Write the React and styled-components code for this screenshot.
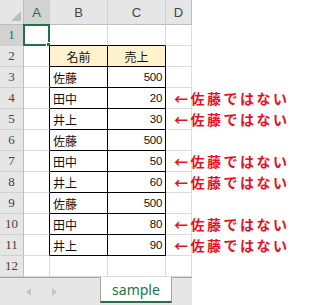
import React from "react";
import styled, { createGlobalStyle } from "styled-components";

const GRID = "#dadada";
const LINE = "#bdbdbd";
const GREEN = "#217346";

const GlobalStyle = createGlobalStyle`
  body {
    margin: 0;
    background: #fff;
    font-family: "Noto Sans CJK JP", "Noto Sans", sans-serif;
  }
`;

const rows = [
  { name: "", sales: "" },
  { name: "名前", sales: "売上", head: true },
  { name: "佐藤", sales: "500" },
  { name: "田中", sales: "20", note: true },
  { name: "井上", sales: "30", note: true },
  { name: "佐藤", sales: "500" },
  { name: "田中", sales: "50", note: true },
  { name: "井上", sales: "60", note: true },
  { name: "佐藤", sales: "500" },
  { name: "田中", sales: "80", note: true },
  { name: "井上", sales: "90", note: true },
  { name: "", sales: "" },
];

const Sheet = styled.div`
  display: grid;
  grid-template-columns: 24px 26px 58px 58px 26px;
  grid-template-rows: 25px repeat(12, 21px);
  width: 192px;
`;

const Corner = styled.div`
  background: #e6e6e6;
  border-right: 1px solid ${LINE};
  border-bottom: 1px solid ${LINE};
  box-sizing: border-box;
  display: flex;
  align-items: flex-end;
  justify-content: flex-end;
  padding: 0 2px 3px 0;

  svg {
    display: block;
  }
`;

const ColHead = styled.div`
  background: ${(p) => (p.$sel ? "#d2d2d2" : "#e6e6e6")};
  color: ${(p) => (p.$sel ? GREEN : "#444")};
  border-right: 1px solid ${(p) => (p.$last ? LINE : "#d0d0d0")};
  border-bottom: 1px solid ${LINE};
  box-sizing: border-box;
  display: flex;
  align-items: center;
  justify-content: center;
  font-family: "Liberation Sans", Arial, sans-serif;
  font-size: 13px;
  padding-top: 1px;
`;

const RowHead = styled.div`
  background: ${(p) => (p.$sel ? "#d2d2d2" : "#e6e6e6")};
  color: ${(p) => (p.$sel ? GREEN : "#444")};
  border-right: 1px solid ${LINE};
  border-bottom: 1px solid #d0d0d0;
  box-sizing: border-box;
  display: flex;
  align-items: center;
  justify-content: center;
  font-family: "Liberation Serif", serif;
  font-size: 13px;
`;

const Cell = styled.div`
  position: relative;
  background: ${(p) => (p.$head ? "#fff2cc" : "#fff")};
  border-right: 1px solid ${(p) => (p.$r ? "#000" : GRID)};
  border-bottom: 1px solid ${(p) => (p.$b ? "#000" : GRID)};
  box-sizing: border-box;
  display: flex;
  align-items: center;
  justify-content: ${(p) => p.$align || "flex-start"};
  padding: 0 3px;
  font-size: 12px;
  color: #111;
  white-space: nowrap;
`;

const Num = styled.span`
  font-family: "Liberation Sans", Arial, sans-serif;
  font-size: 11.5px;
  letter-spacing: -0.3px;
`;

const Note = styled.span`
  color: #e8101e;
  font-weight: 700;
  font-size: 14px;
  letter-spacing: 2.5px;
  padding-left: 5px;
  position: relative;
  z-index: 1;
`;

const Selection = styled.div`
  position: absolute;
  left: -1px;
  top: -1px;
  right: -1px;
  bottom: -1px;
  border: 2px solid ${GREEN};
  pointer-events: none;

  &::after {
    content: "";
    position: absolute;
    right: -5px;
    bottom: -5px;
    width: 5px;
    height: 5px;
    background: ${GREEN};
    border: 1px solid #fff;
  }
`;

const TabBar = styled.div`
  display: flex;
  align-items: flex-start;
  width: 192px;
  height: 28px;
  background: #e6e6e6;
`;

const Nav = styled.div`
  width: 100px;
  height: 100%;
  box-sizing: border-box;
  border-top: 1px solid #a6a6a6;
  display: flex;
  align-items: center;
  gap: 21px;
  padding-left: 26px;
`;

const Tab = styled.div`
  width: 72px;
  height: 26px;
  box-sizing: border-box;
  background: #fff;
  border-left: 1px solid #a6a6a6;
  border-right: 1px solid #a6a6a6;
  border-bottom: 2px solid ${GREEN};
  display: flex;
  align-items: center;
  justify-content: center;
  color: ${GREEN};
  font-family: "Noto Sans", sans-serif;
  font-size: 14px;
`;

const Rest = styled.div`
  flex: 1;
  height: 100%;
  border-top: 1px solid #a6a6a6;
`;

function Arrow({ dir }) {
  return (
    <svg width="5" height="8" viewBox="0 0 5 8">
      <path d={dir === "left" ? "M5 0 L0 4 L5 8 Z" : "M0 0 L5 4 L0 8 Z"} fill="#c4c4c4" />
    </svg>
  );
}

export default function App() {
  return (
    <>
      <GlobalStyle />
      <Sheet>
        <Corner>
          <svg width="10" height="10" viewBox="0 0 10 10">
            <path d="M10 0 L10 10 L0 10 Z" fill="#bdbdbd" />
          </svg>
        </Corner>
        {["A", "B", "C", "D"].map((c, i) => (
          <ColHead key={c} $sel={i === 0} $last={i === 3}>
            {c}
          </ColHead>
        ))}
        {rows.map((row, i) => {
          const n = i + 1;
          const inTable = n >= 2 && n <= 11;
          const tableTop = n >= 1 && n <= 11;
          return (
            <React.Fragment key={n}>
              <RowHead $sel={n === 1}>{n}</RowHead>
              <Cell $r={inTable}>{n === 1 && <Selection />}</Cell>
              <Cell
                $r={inTable}
                $b={tableTop}
                $head={row.head}
                $align={row.head ? "center" : "flex-start"}
              >
                {row.name}
              </Cell>
              <Cell
                $r={inTable}
                $b={tableTop}
                $head={row.head}
                $align={row.head ? "center" : "flex-end"}
              >
                {row.head ? row.sales : <Num>{row.sales}</Num>}
              </Cell>
              <Cell>{row.note && <Note>←佐藤ではない</Note>}</Cell>
            </React.Fragment>
          );
        })}
      </Sheet>
      <TabBar>
        <Nav>
          <Arrow dir="left" />
          <Arrow dir="right" />
        </Nav>
        <Tab>sample</Tab>
        <Rest />
      </TabBar>
    </>
  );
}
